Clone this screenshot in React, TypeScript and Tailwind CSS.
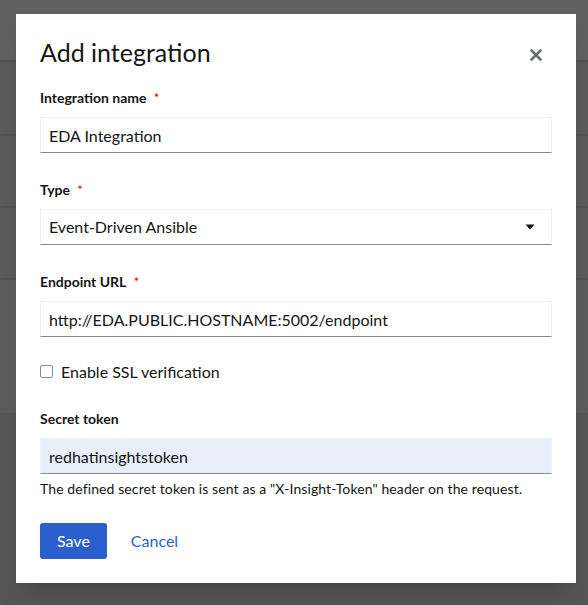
import React from "react";

const fieldBase =
  "w-full h-[36px] px-2 text-[16px] leading-6 text-[#151515] border border-[#f0f0f0] border-b-[#8a8d90] outline-none";

const Label = ({ text, required }: { text: string; required?: boolean }) => (
  <div className="h-6 mb-2 flex items-center text-[14px] font-bold text-[#151515]">
    {text}
    {required && <span className="ml-[7px] text-[#c9190b] font-normal">*</span>}
  </div>
);

const App = () => {
  return (
    <div
      className="relative w-[588px] h-[605px] overflow-hidden bg-[#5a5a5a]"
      style={{ fontFamily: "Lato, 'Liberation Sans', sans-serif" }}
    >
      {/* page behind the backdrop */}
      <div className="flex flex-col">
        <div className="h-[62px] bg-[#616161] border-b-2 border-[#4f4f4f]" />
        <div className="h-[74px] bg-[#5b5b5b] border-b-2 border-[#4f4f4f]" />
        <div className="h-[72px] bg-[#5b5b5b] border-b-2 border-[#4f4f4f]" />
        <div className="h-[72px] bg-[#5b5b5b] border-b-2 border-[#4f4f4f]" />
        <div className="h-[133px] bg-[#5c5c5c]" />
        <div className="h-[200px] bg-[#555555]" />
      </div>

      {/* modal */}
      <div className="absolute left-[16px] top-[14px] w-[560px] bg-white px-6 pt-[22px] pb-6 shadow-xl">
        <div className="flex items-start justify-between">
          <h1 className="text-[25px] leading-8 text-[#151515] font-normal">Add integration</h1>
          <button aria-label="Close" className="mt-[3px] w-8 h-8 flex items-center justify-center">
            <svg width="12" height="12" viewBox="0 0 12 12">
              <path d="M1.5 1.5 L10.5 10.5 M10.5 1.5 L1.5 10.5" stroke="#6a6e73" strokeWidth="2.6" strokeLinecap="round" />
            </svg>
          </button>
        </div>

        <div className="mt-[14px] flex flex-col">
          <Label text="Integration name" required />
          <input className={fieldBase} defaultValue="EDA Integration" />

          <div className="mt-6">
            <Label text="Type" required />
            <div className={`${fieldBase} flex items-center justify-between pr-4`}>
              <span>Event-Driven Ansible</span>
              <svg width="10" height="6" viewBox="0 0 10 6">
                <path d="M0.5 0.5 H9.5 L5 5.5 Z" fill="#151515" />
              </svg>
            </div>
          </div>

          <div className="mt-6">
            <Label text="Endpoint URL" required />
            <input className={fieldBase} defaultValue="http://EDA.PUBLIC.HOSTNAME:5002/endpoint" />
          </div>

          <label className="mt-6 h-[21px] flex items-center gap-2 text-[16px] text-[#151515]">
            <span className="w-[13px] h-[13px] rounded-[2px] border border-[#8a8d90] bg-white" />
            Enable SSL verification
          </label>

          <div className="mt-6">
            <Label text="Secret token" />
            <input className={`${fieldBase} bg-[#e8eefa]`} defaultValue="redhatinsightstoken" />
            <p className="mt-1 text-[14px] leading-[21px] tracking-[0.1px] text-[#151515]">
              The defined secret token is sent as a "X-Insight-Token" header on the request.
            </p>
          </div>

          <div className="mt-6 flex items-center gap-2">
            <button className="h-9 px-[17px] rounded-[3px] bg-[#2b5fcc] text-white text-[16px]">Save</button>
            <button className="h-9 px-4 text-[#2b5fcc] text-[16px]">Cancel</button>
          </div>
        </div>
      </div>
    </div>
  );
};

export default App;
